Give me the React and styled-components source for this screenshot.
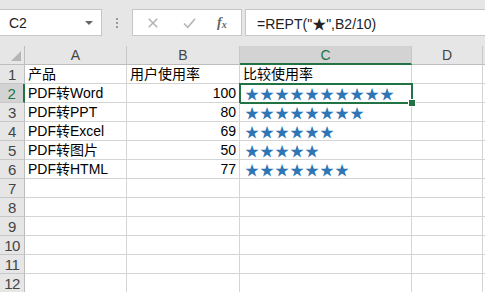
import React from "react";
import styled, { createGlobalStyle } from "styled-components";

const GlobalStyle = createGlobalStyle`
  html, body {
    margin: 0;
    padding: 0;
    background: #ffffff;
    overflow: hidden;
  }
  body {
    font-family: "Liberation Sans", "Noto Sans CJK SC", sans-serif;
  }
`;

const COLS = ["A", "B", "C", "D"];
const WIDTHS = "25px 102px 113px 172px 71px 1fr";

const rows = [
  ["产品", "用户使用率", "比较使用率"],
  ["PDF转Word", 100],
  ["PDF转PPT", 80],
  ["PDF转Excel", 69],
  ["PDF转图片", 50],
  ["PDF转HTML", 77],
];

const App = () => {
  return (
    <>
      <GlobalStyle />
      <Sheet>
        <TopBar>
          <NameBox>
            <span>C2</span>
            <Caret />
          </NameBox>
          <Grip>
            <i />
            <i />
            <i />
          </Grip>
          <ButtonsBox>
            <ToolIcon viewBox="0 0 14 14">
              <path d="M2 2 L12 12 M12 2 L2 12" />
            </ToolIcon>
            <ToolIcon viewBox="0 0 16 14">
              <path d="M1.5 7.5 L6 12 L14.5 2" />
            </ToolIcon>
            <Fx>
              f<sub>x</sub>
            </Fx>
          </ButtonsBox>
          <FormulaBox>=REPT("★",B2/10)</FormulaBox>
        </TopBar>

        <Grid>
          <Corner>
            <CornerTriangle />
          </Corner>
          {COLS.map((c) => (
            <ColHead key={c} $active={c === "C"}>
              {c}
            </ColHead>
          ))}
          <ColHead $blank />

          {Array.from({ length: 12 }).map((_, i) => {
            const r = rows[i];
            const n = i + 1;
            const isHeader = i === 0;
            return (
              <React.Fragment key={n}>
                <RowHead $active={n === 2}>{n}</RowHead>
                <Cell>{r ? r[0] : ""}</Cell>
                <Cell $right={!isHeader}>{r ? r[1] : ""}</Cell>
                <Cell $selected={n === 2}>
                  {r && isHeader && r[2]}
                  {r && !isHeader && (
                    <Stars>{"★".repeat(Math.floor(r[1] / 10))}</Stars>
                  )}
                  {n === 2 && <Handle />}
                </Cell>
                <Cell />
                <Cell $last />
              </React.Fragment>
            );
          })}
        </Grid>
      </Sheet>
    </>
  );
};

export default App;

const Sheet = styled.div`
  width: 485px;
  height: 292px;
  overflow: hidden;
  background: #fff;
`;

const TopBar = styled.div`
  display: flex;
  align-items: center;
  height: 46px;
  padding-bottom: 10px;
  padding-top: 9px;
  box-sizing: border-box;
  background: #e6e6e6;
`;

const NameBox = styled.div`
  position: relative;
  box-sizing: border-box;
  width: 103px;
  height: 27px;
  margin-left: -1px;
  background: #fff;
  border: 1px solid #c6c6c6;
  display: flex;
  align-items: center;
  justify-content: space-between;
  padding: 0 8px 0 9px;
  font-size: 14px;
  color: #222;
`;

const Caret = styled.span`
  width: 0;
  height: 0;
  border-left: 4px solid transparent;
  border-right: 4px solid transparent;
  border-top: 4px solid #666;
`;

const Grip = styled.div`
  width: 30px;
  display: flex;
  flex-direction: column;
  align-items: center;
  gap: 2px;
  & > i {
    display: block;
    width: 2px;
    height: 2px;
    background: #999;
  }
`;

const ButtonsBox = styled.div`
  box-sizing: border-box;
  width: 110px;
  height: 27px;
  background: #fff;
  border: 1px solid #c6c6c6;
  display: flex;
  align-items: center;
  padding-left: 14px;
  gap: 23px;
`;

const ToolIcon = styled.svg`
  width: 12px;
  height: 12px;
  fill: none;
  stroke: #b4b4b4;
  stroke-width: 1.8;
  &:nth-child(2) {
    width: 15px;
  }
`;

const Fx = styled.span`
  font-family: "Liberation Serif", serif;
  font-style: italic;
  font-weight: bold;
  font-size: 14px;
  color: #666;
  margin-left: -3px;
  & > sub {
    font-size: 10px;
    vertical-align: -1px;
  }
`;

const FormulaBox = styled.div`
  box-sizing: border-box;
  flex: 1;
  height: 27px;
  margin-left: 3px;
  margin-right: -2px;
  background: #fff;
  border: 1px solid #c6c6c6;
  display: flex;
  align-items: center;
  padding-left: 11px;
  font-size: 14px;
  color: #222;
`;

const Grid = styled.div`
  display: grid;
  grid-template-columns: ${WIDTHS};
  grid-auto-rows: 19px;
  font-size: 14px;
  color: #000;
`;

const HeadBase = styled.div`
  box-sizing: border-box;
  background: #e6e6e6;
  color: #444;
  display: flex;
  align-items: center;
  justify-content: center;
  font-size: 14px;
`;

const Corner = styled(HeadBase)`
  position: relative;
  border-right: 1px solid #bdbdbd;
  border-bottom: 1px solid #bdbdbd;
`;

const CornerTriangle = styled.span`
  position: absolute;
  right: 3px;
  bottom: 3px;
  width: 0;
  height: 0;
  border-left: 10px solid transparent;
  border-bottom: 10px solid #b5b5b5;
`;

const ColHead = styled(HeadBase)`
  border-right: 1px solid ${(p) => (p.$blank ? "transparent" : "#c8c8c8")};
  border-bottom: ${(p) => (p.$active ? "2px solid #217346" : "1px solid #bdbdbd")};
  background: ${(p) => (p.$active ? "#d3d3d3" : "#e6e6e6")};
  color: ${(p) => (p.$active ? "#217346" : "#444")};
  padding-top: ${(p) => (p.$active ? "1px" : "0")};
`;

const RowHead = styled(HeadBase)`
  border-bottom: 1px solid #c8c8c8;
  border-right: ${(p) => (p.$active ? "2px solid #217346" : "1px solid #bdbdbd")};
  background: ${(p) => (p.$active ? "#d3d3d3" : "#e6e6e6")};
  color: ${(p) => (p.$active ? "#217346" : "#444")};
  font-size: 15px;
  letter-spacing: -0.5px;
`;

const Cell = styled.div`
  position: relative;
  box-sizing: border-box;
  border-right: 1px solid ${(p) => (p.$last ? "transparent" : "#d4d4d4")};
  border-bottom: 1px solid #d4d4d4;
  display: flex;
  align-items: center;
  justify-content: ${(p) => (p.$right ? "flex-end" : "flex-start")};
  padding: 0 3px;
  white-space: nowrap;
  overflow: visible;
  line-height: 18px;
  ${(p) =>
    p.$selected &&
    `
    &::after {
      content: "";
      position: absolute;
      left: -1px;
      top: -1px;
      right: -2px;
      bottom: -2px;
      border: 2px solid #217346;
      pointer-events: none;
    }
  `}
`;

const Stars = styled.span`
  font-family: "Noto Sans CJK SC", sans-serif;
  font-size: 14px;
  color: #2e75b6;
  letter-spacing: 1px;
  margin-left: 2px;
`;

const Handle = styled.span`
  position: absolute;
  right: -5px;
  bottom: -5px;
  width: 6px;
  height: 6px;
  background: #217346;
  border: 1px solid #fff;
  z-index: 2;
`;
